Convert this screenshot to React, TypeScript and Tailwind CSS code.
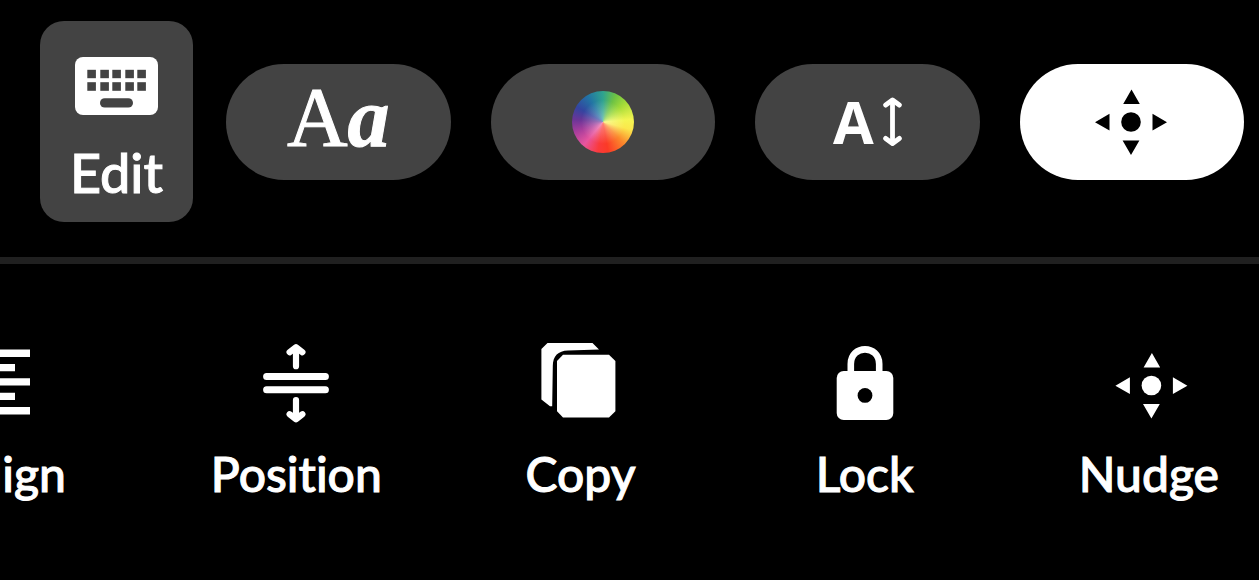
import type { ReactNode } from "react";
import clsx from "clsx";

const KEY_COLUMNS = [12, 25, 37, 50, 62];

const KeyboardIcon = () => (
  <svg className="w-[83px] h-[58px]" viewBox="0 0 83 58" aria-hidden="true">
    <rect width="83" height="58" rx="8" fill="#fff" />
    <g fill="#434343">
      {KEY_COLUMNS.map((x) => (
        <g key={x}>
          <rect x={x + 0.3} y="12.8" width="8.6" height="8.4" />
          <rect x={x + 0.3} y="25.2" width="8.6" height="8.6" />
        </g>
      ))}
      <rect x="25" y="41.2" width="33" height="9.4" rx="4.7" />
    </g>
  </svg>
);

const NudgeIcon = ({
  className,
  viewBox,
}: {
  className: string;
  viewBox: string;
}) => (
  <svg
    className={className}
    viewBox={viewBox}
    fill="currentColor"
    aria-hidden="true"
  >
    <circle r="9.8" />
    <path d="M.5-32.5 8.8-18H-7.8ZM0 33 8.4 18.5H-8.4ZM-36 .2-21.5-8.2V8.6ZM36 .2 21.5-8.2V8.6Z" />
  </svg>
);

const HeightArrowIcon = () => (
  <svg
    className="w-5 h-[50px]"
    viewBox="0 0 20 50"
    fill="none"
    stroke="currentColor"
    strokeLinecap="round"
    strokeLinejoin="round"
    aria-hidden="true"
  >
    <path d="M10.5 4V46" strokeWidth="4.8" />
    <path
      d="M3.7 8 10.5 3 17.3 8M3.7 41.4 10.5 46.4 17.3 41.4"
      strokeWidth="5"
    />
  </svg>
);

const ToolIcon = ({ children }: { children: ReactNode }) => (
  <svg
    className="w-[100px] h-[84px]"
    viewBox="-1 0 100 84"
    fill="currentColor"
    aria-hidden="true"
  >
    {children}
  </svg>
);

const AlignIcon = () => (
  <ToolIcon>
    <path d="M0 9.5H67V17H0ZM15 24H52V31.2H15ZM0 38.3H67V45.5H0ZM15 52.7H52V60H15ZM0 67H67V74.4H0Z" />
  </ToolIcon>
);

const PositionIcon = () => (
  <ToolIcon>
    <g
      fill="none"
      stroke="currentColor"
      strokeLinecap="round"
      strokeLinejoin="round"
    >
      <path d="M19.6 36.4H78.4M19.6 49.7H78.4" strokeWidth="7" />
      <path
        d="M49 8V26.2M42.6 12.2 49 7.2 55.4 12.2M49 60V78M42.6 74.2 49 79.2 55.4 74.2"
        strokeWidth="6.2"
      />
    </g>
  </ToolIcon>
);

const CopyIcon = () => (
  <ToolIcon>
    <path d="M10.4 9 16.5 3H61.5L68 9.6 37 10.6C27 11 22 16 21.8 26L21.2 66.2H19L10.4 59.5Z" />
    <path d="M32 14.8H78L84.4 21V71.2L78 77.5H32L26 71.2V21Z" />
  </ToolIcon>
);

const LockIcon = () => (
  <ToolIcon>
    <path
      d="M34.8 34V24C34.8 4.5 63.2 4.5 63.2 24V34"
      fill="none"
      stroke="currentColor"
      strokeWidth="6.6"
    />
    <rect x="20.7" y="31" width="56.6" height="49" rx="7" />
    <circle cx="49" cy="55.4" r="7.4" fill="#000" />
  </ToolIcon>
);

const tools = [
  { label: "Align", icon: <AlignIcon /> },
  { label: "Position", icon: <PositionIcon /> },
  { label: "Copy", icon: <CopyIcon /> },
  { label: "Lock", icon: <LockIcon /> },
  {
    label: "Nudge",
    icon: (
      <NudgeIcon
        className="w-[100px] h-[84px]"
        viewBox="-52.4 -45.5 100 84"
      />
    ),
  },
];

const Pill = ({
  label,
  active,
  children,
}: {
  label: string;
  active?: boolean;
  children: ReactNode;
}) => (
  <button
    type="button"
    aria-label={label}
    aria-pressed={active}
    className={clsx(
      "flex flex-1 h-29 items-center justify-center rounded-full",
      active ? "bg-white text-black" : "bg-[#434343] text-white"
    )}
  >
    {children}
  </button>
);

export default function App() {
  return (
    <main className="min-h-screen overflow-hidden bg-black text-white font-['Lato',sans-serif] font-medium [font-variant-ligatures:none]">
      <div className="flex items-center border-b-[7px] border-[#202020] pt-[21px] pb-[35px] pl-10 pr-[15px]">
        <button
          type="button"
          className="mr-[33px] flex h-[201px] w-[153px] shrink-0 flex-col items-center rounded-3xl bg-[#434343] pt-9"
        >
          <KeyboardIcon />
          <span className="mt-6 text-[54px] leading-17 [-webkit-text-stroke:1px]">
            Edit
          </span>
        </button>
        <div className="flex flex-1 gap-10">
          <Pill label="Font">
            <span className="pb-2 font-['Liberation_Serif',serif] text-[84px] leading-none [-webkit-text-stroke:1px]">
              A<b className="italic">a</b>
            </span>
          </Pill>
          <Pill label="Color">
            <span className="relative size-[62px] overflow-hidden rounded-full bg-[conic-gradient(#2fa38f,#6cc244_25deg,#a5dc38_50deg,#f4f552_85deg,#fbe84c_105deg,#fb8a2c_135deg,#fb3a26_170deg,#fa3a3c_190deg,#e8559f_220deg,#a83e9c_250deg,#6b3597_275deg,#3345a0_300deg,#2274a4_330deg,#2fa38f)]">
              <span className="absolute inset-0 bg-[radial-gradient(circle,rgba(255,255,255,0.4),transparent_50%)]" />
            </span>
          </Pill>
          <Pill label="Text size">
            <span className="flex items-center gap-2">
              <span className="font-['Open_Sans',sans-serif] text-[59px] font-bold leading-none">
                A
              </span>
              <HeightArrowIcon />
            </span>
          </Pill>
          <Pill label="Nudge" active>
            <NudgeIcon className="w-[74px] h-[68px]" viewBox="-36 -34 74 68" />
          </Pill>
        </div>
      </div>

      <nav className="-ml-[130px] -mr-8 grid grid-cols-5 pt-[76px]">
        {tools.map(({ label, icon }) => (
          <button
            key={label}
            type="button"
            className="flex flex-col items-center gap-5"
          >
            {icon}
            <span className="text-[48px] leading-15 [-webkit-text-stroke:1px]">
              {label}
            </span>
          </button>
        ))}
      </nav>
    </main>
  );
}
